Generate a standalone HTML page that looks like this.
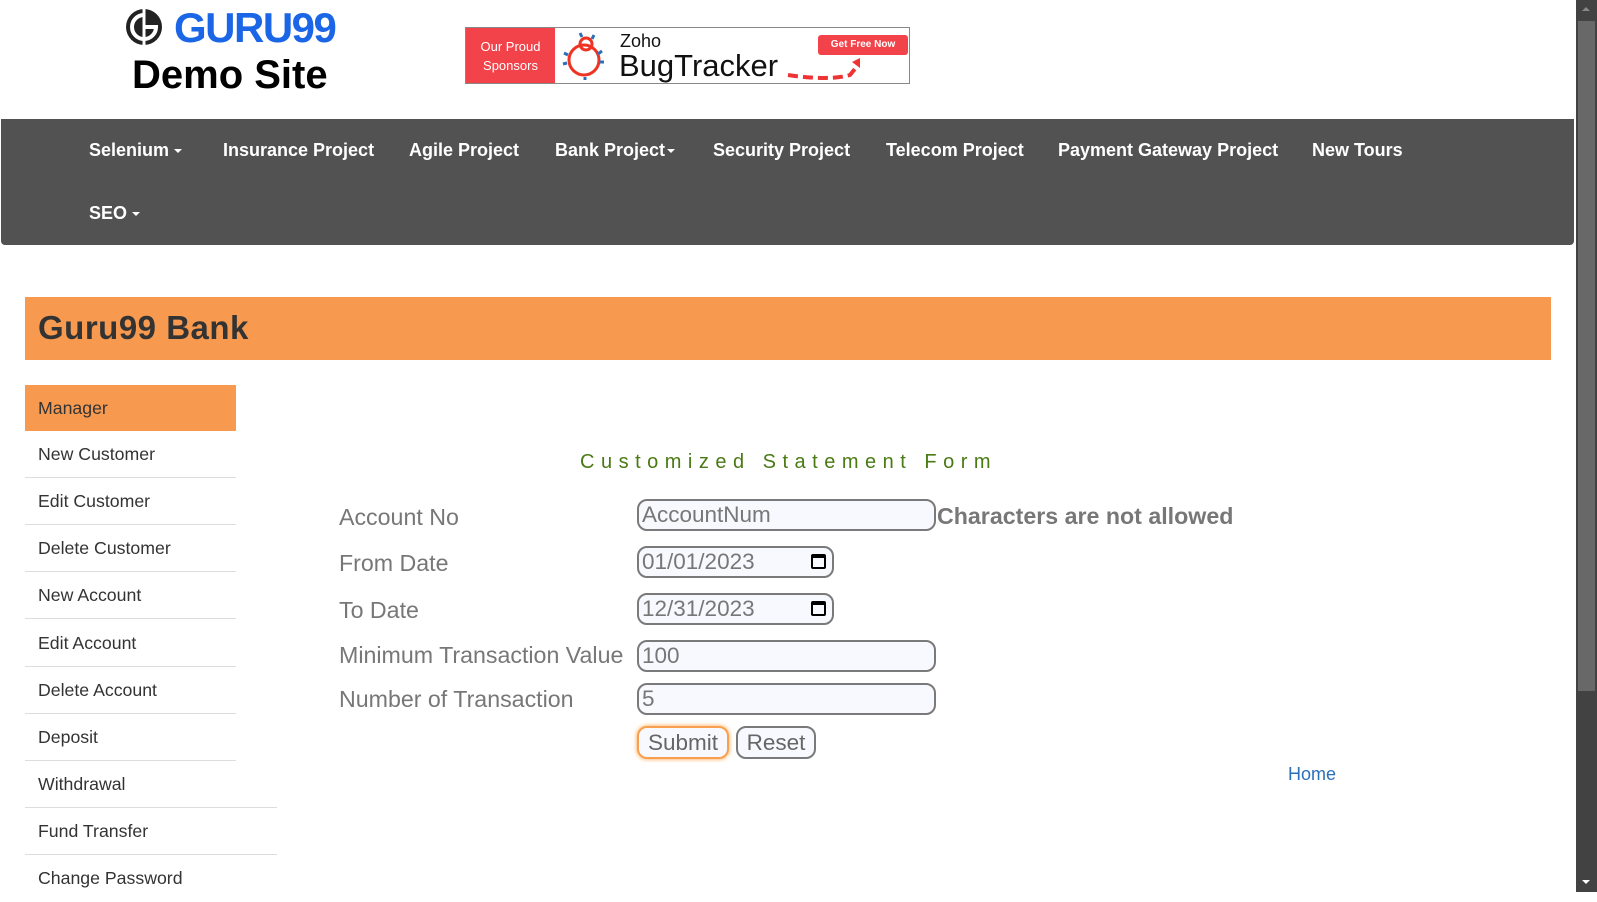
<!DOCTYPE html>
<html><head><meta charset="utf-8"><style>
body{margin:0;width:1597px;height:892px;overflow:hidden;background:#fff;font-family:"Liberation Sans",sans-serif;position:relative}
.a{position:absolute;white-space:nowrap}
.nav{position:absolute;left:1px;top:119px;width:1573px;height:126px;background:#525252;border-radius:0 0 4px 4px}
.nav span{position:absolute;color:#fff;font-weight:bold;font-size:18px;line-height:20px}
.car{display:inline-block;width:0;height:0;border-left:4px solid transparent;border-right:4px solid transparent;border-top:4px solid #fff;vertical-align:middle;margin-left:5px}
.side{position:absolute;left:25px;width:211px;border-bottom:1px solid #ddd;font-size:17.7px;color:#333;padding-left:13px;box-sizing:border-box;height:47px;line-height:47px}
.lbl{position:absolute;left:339px;font-size:23.2px;color:#777}
.inp{position:absolute;left:637px;height:32px;border:2px solid #7a7a7a;border-radius:10px;background:#f8f9ff;box-sizing:border-box;font-size:22.5px;color:#777;line-height:28px;padding-left:3px}
.cal{position:absolute;right:6px;top:6px;width:15px;height:15px;border:2px solid #000;border-top-width:4px;border-radius:2px;box-sizing:border-box}
.btn{position:absolute;top:726px;height:33px;border:2px solid #7a7a7a;border-radius:10px;background:#f8f9ff;box-sizing:border-box;font-size:22.5px;color:#666;line-height:29px;text-align:center}
</style></head><body>
<svg class="a" style="left:124px;top:7px" width="40" height="40" viewBox="0 0 40 40"><circle cx="20" cy="20" r="18" fill="#222"/><path d="M20 8a12 12 0 1 0 12 12h-12" stroke="#fff" stroke-width="4" fill="none"/><path d="M20 2v36" stroke="#fff" stroke-width="3"/></svg>
<div class="a" style="left:174px;top:4px;font-size:42px;font-weight:bold;color:#1a66e6;letter-spacing:-1.5px">GURU99</div>
<div class="a" style="left:132px;top:53px;font-size:40px;font-weight:bold;color:#000">Demo Site</div>
<div class="a" style="left:465px;top:27px;width:445px;height:57px;border:1px solid #888;box-sizing:border-box;background:#fff">
<div class="a" style="left:0;top:0;width:89px;height:55px;background:#f2424a;color:#fff;font-size:13px;text-align:center;line-height:19px;padding-top:9px;box-sizing:border-box;white-space:normal;font-family:'Liberation Sans Narrow','Liberation Sans',sans-serif">Our Proud<br>Sponsors</div>
<svg class="a" style="left:92px;top:3px" width="52" height="50" viewBox="0 0 52 50"><circle cx="26" cy="29" r="15" fill="none" stroke="#e32" stroke-width="3"/><circle cx="28" cy="13" r="6" fill="none" stroke="#e32" stroke-width="3"/><g stroke="#2a6fb8" stroke-width="3"><path d="M6 22l4 2M5 33l4-1M44 20l-4 3M46 31l-4 0M22 2l2 4M36 4l-2 4M27 46v3"/></g></svg>
<div class="a" style="left:154px;top:3px;font-size:18px;color:#111">Zoho</div>
<div class="a" style="left:153px;top:20px;font-size:31px;color:#111">BugTracker</div>
<div class="a" style="left:352px;top:7px;width:90px;height:20px;background:#f2424a;border-radius:3px;color:#fff;font-size:10px;font-weight:bold;text-align:center;line-height:20px">Get Free Now</div>
<svg class="a" style="left:320px;top:28px" width="80" height="26"><path d="M2 19q40 6 62 0l8-10" stroke="#e33" stroke-width="4" fill="none" stroke-dasharray="10 5"/><path d="M66 6l8-4 0 10z" fill="#e33"/></svg>
</div>
<div class="nav">
<span style="left:88px;top:21px">Selenium<i class="car"></i></span>
<span style="left:222px;top:21px">Insurance Project</span>
<span style="left:408px;top:21px">Agile Project</span>
<span style="left:554px;top:21px">Bank Project<i class="car" style="margin-left:2px"></i></span>
<span style="left:712px;top:21px">Security Project</span>
<span style="left:885px;top:21px">Telecom Project</span>
<span style="left:1057px;top:21px">Payment Gateway Project</span>
<span style="left:1311px;top:21px">New Tours</span>
<span style="left:88px;top:84px">SEO<i class="car"></i></span>
</div>
<div class="a" style="left:25px;top:297px;width:1526px;height:63px;background:#f79a50"></div>
<div class="a" style="left:38px;top:309px;font-size:33px;font-weight:bold;color:#333;letter-spacing:0.5px">Guru99 Bank</div>
<div class="side" style="top:385px;background:#f79a50;border:none;height:46px;line-height:46px">Manager</div>
<div class="side" style="top:431px">New Customer</div>
<div class="side" style="top:478px">Edit Customer</div>
<div class="side" style="top:525px">Delete Customer</div>
<div class="side" style="top:572px">New Account</div>
<div class="side" style="top:620px">Edit Account</div>
<div class="side" style="top:667px">Delete Account</div>
<div class="side" style="top:714px">Deposit</div>
<div class="side" style="top:761px;width:252px">Withdrawal</div>
<div class="side" style="top:808px;width:252px">Fund Transfer</div>
<div class="side" style="top:855px;border:none">Change Password</div>
<div class="a" style="left:580px;top:451px;font-size:20px;letter-spacing:6.5px;color:#4a7a14">Customized Statement Form</div>
<div class="lbl" style="top:504px">Account No</div>
<div class="lbl" style="top:550px">From Date</div>
<div class="lbl" style="top:597px">To Date</div>
<div class="lbl" style="top:642px">Minimum Transaction Value</div>
<div class="lbl" style="top:686px">Number of Transaction</div>
<div class="inp" style="top:499px;width:299px">AccountNum</div>
<div class="a" style="left:937px;top:503px;font-size:23.2px;font-weight:bold;color:#777">Characters are not allowed</div>
<div class="inp" style="top:546px;width:197px">01/01/2023<i class="cal"></i></div>
<div class="inp" style="top:593px;width:197px">12/31/2023<i class="cal"></i></div>
<div class="inp" style="top:640px;width:299px">100</div>
<div class="inp" style="top:683px;width:299px">5</div>
<div class="btn" style="left:637px;width:92px;border-color:#f9a050;box-shadow:0 0 5px #ffa040">Submit</div>
<div class="btn" style="left:736px;width:80px">Reset</div>
<div class="a" style="left:1288px;top:764px;font-size:18px;color:#2a6fb8">Home</div>
<div class="a" style="left:1576px;top:0;width:21px;height:892px;background:#424242"></div>
<div class="a" style="left:1578px;top:21px;width:17px;height:670px;background:#686868"></div>
<div class="a" style="left:1582px;top:7px;width:0;height:0;border-left:4px solid transparent;border-right:4px solid transparent;border-bottom:4px solid #888"></div>
<div class="a" style="left:1582px;top:880px;width:0;height:0;border-left:4px solid transparent;border-right:4px solid transparent;border-top:4px solid #fff"></div>
</body></html>
